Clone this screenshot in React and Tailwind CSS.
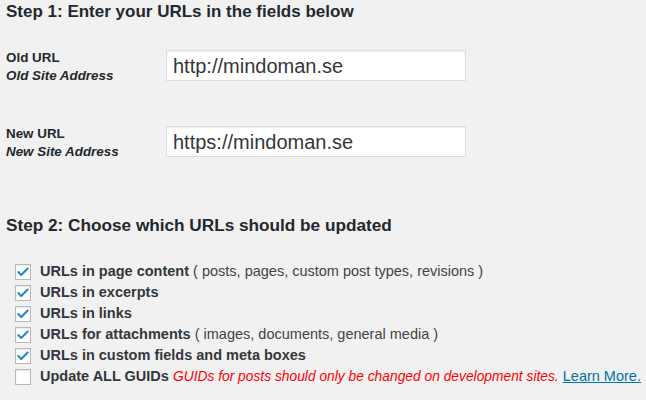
import { Check } from "lucide-react";

const options = [
    { label: "URLs in page content", note: "( posts, pages, custom post types, revisions )", checked: true },
    { label: "URLs in excerpts", checked: true },
    { label: "URLs in links", checked: true },
    { label: "URLs for attachments", note: "( images, documents, general media )", checked: true },
    { label: "URLs in custom fields and meta boxes", checked: true },
    { label: "Update ALL GUIDs", warning: true, checked: false },
];

function Checkbox({ checked }) {
    return (
        <span className="w-4 h-4 shrink-0 bg-white border border-[#b4b9be] shadow-[inset_0_1px_2px_rgba(0,0,0,0.1)] flex items-center justify-center">
            {checked && <Check className="w-[14px] h-[14px] text-[#1e8cbe]" strokeWidth={3.5} />}
        </span>
    );
}

function UrlRow({ label, hint, value, className }) {
    return (
        <div className={"flex items-start " + className}>
            <div className="w-[160px] -mt-[1px] text-[13.4px] font-bold leading-[18px]">
                <div>{label}</div>
                <div className="italic">{hint}</div>
            </div>
            <div className="w-[300px] h-[31px] bg-white border border-[#dddddd] shadow-[inset_0_1px_2px_rgba(0,0,0,0.07)] px-[6px] flex items-center text-[20px] text-[#32373c]">
                {value}
            </div>
        </div>
    );
}

export default function App() {
    return (
        <div className="w-[646px] h-[400px] bg-[#f1f1f1] text-[#23282d] font-['Liberation_Sans',Arial,sans-serif] overflow-hidden px-[6px]">
            <h2 className="text-[17px] font-bold leading-[24px]">Step 1: Enter your URLs in the fields below</h2>

            {/* URL fields */}
            <UrlRow label="Old URL" hint="Old Site Address" value="http://mindoman.se" className="mt-[26px]" />
            <UrlRow label="New URL" hint="New Site Address" value="https://mindoman.se" className="mt-[41px]" />

            <h2 className="mt-[52px] text-[17.2px] font-bold leading-[24px]">Step 2: Choose which URLs should be updated</h2>

            <ul className="mt-[24px] pl-[9px] flex flex-col text-[14.5px]">
                {options.map((o) => (
                    <li key={o.label} className="h-[21px] flex items-center gap-[9px] whitespace-nowrap">
                        <Checkbox checked={o.checked} />
                        <span>
                            <span className="font-bold text-[#32373c]">{o.label}</span>
                            {o.note && <span className="text-[#444]"> {o.note}</span>}
                            {o.warning && (
                                <>
                                    {" "}
                                    <span className="italic text-[13.8px] text-[#ff0000]">GUIDs for posts should only be changed on development sites.</span>{" "}
                                    <a href="#" className="text-[#0073aa] underline">Learn More.</a>
                                </>
                            )}
                        </span>
                    </li>
                ))}
            </ul>
        </div>
    );
}
